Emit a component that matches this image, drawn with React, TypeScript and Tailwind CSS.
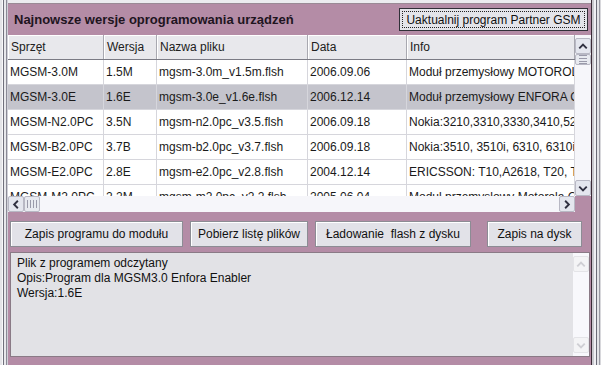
const rows = [
  ["MGSM-3.0M", "1.5M", "mgsm-3.0m_v1.5m.flsh", "2006.09.06", "Moduł przemysłowy MOTOROLA G20"],
  ["MGSM-3.0E", "1.6E", "mgsm-3.0e_v1.6e.flsh", "2006.12.14", "Moduł przemysłowy ENFORA GSM"],
  ["MGSM-N2.0PC", "3.5N", "mgsm-n2.0pc_v3.5.flsh", "2006.09.18", "Nokia:3210,3310,3330,3410,5210"],
  ["MGSM-B2.0PC", "3.7B", "mgsm-b2.0pc_v3.7.flsh", "2006.09.18", "Nokia:3510, 3510i, 6310, 6310i"],
  ["MGSM-E2.0PC", "2.8E", "mgsm-e2.0pc_v2.8.flsh", "2004.12.14", "ERICSSON: T10,A2618, T20, T28"],
  ["MGSM-M2.0PC", "2.2M", "mgsm-m2.0pc_v2.2.flsh", "2005.06.04", "Moduł przemysłowy Motorola G20"],
];

const cols = ["w-[96px]", "w-[53px]", "w-[151px]", "w-[99px]", "w-[168px]"];
const heads = ["Sprzęt", "Wersja", "Nazwa pliku", "Data", "Info"];

function Arrow({ dir, faded }: { dir: "up" | "down" | "left" | "right"; faded?: boolean }) {
  const d = {
    up: "M3.5 9.5 L7.5 5.5 L11.5 9.5",
    down: "M3.5 5.5 L7.5 9.5 L11.5 5.5",
    left: "M9.5 3.5 L5.5 7.5 L9.5 11.5",
    right: "M5.5 3.5 L9.5 7.5 L5.5 11.5",
  }[dir];
  return (
    <div
      className={`flex h-[16px] w-[16px] flex-none items-center justify-center rounded-[2px] border ${
        faded ? "border-[#e4e4e8] bg-[#f4f4f6]" : "border-[#b8b8c4] bg-[#e4e6ee]"
      }`}
    >
      <svg width="15" height="15" viewBox="0 0 15 15">
        <path d={d} fill="none" stroke={faded ? "#cfcfd4" : "#303040"} strokeWidth="2" />
      </svg>
    </div>
  );
}

function Grip({ vertical }: { vertical?: boolean }) {
  return (
    <div
      className={`flex flex-none items-center justify-center gap-[2px] rounded-[2px] border border-[#b8b8c4] bg-[#e8eaf0] ${
        vertical ? "h-[11px] w-[16px] flex-col" : "h-[16px] w-[16px] flex-row"
      }`}
    >
      {[0, 1, 2, 3].map((i) => (
        <div key={i} className={vertical ? "h-px w-[8px] bg-[#9a9aaa]" : "h-[8px] w-px bg-[#9a9aaa]"} />
      ))}
    </div>
  );
}

function Btn({ label, w, ml }: { label: string; w: string; ml: string }) {
  return (
    <div
      className={`${w} ${ml} flex h-[26px] flex-none items-center justify-center whitespace-pre border border-[#8c8c94] bg-[#e2e2e8] text-[12px] text-[#111] shadow-[inset_1px_1px_0_#fff]`}
    >
      {label}
    </div>
  );
}

export default function App() {
  return (
    <div
      className="flex h-[365px] w-[601px] overflow-hidden bg-[#d8d8dc]"
      style={{ fontFamily: '"Liberation Sans", Arial, sans-serif' }}
    >
      {/* left window frame */}
      <div className="flex w-[8px] flex-none">
        <div className="w-[2px] bg-[#e4e4e8]" />
        <div className="w-px bg-[#f8f8fa]" />
        <div className="w-px bg-[#70707c]" />
        <div className="w-[2px] bg-[#e8e8ec]" />
        <div className="w-px bg-[#8a8a96]" />
        <div className="w-px bg-[#d0d0d8]" />
      </div>

      <div className="flex w-[583px] flex-none flex-col">
        <div className="h-[4px] flex-none border-b border-[#9a8a96] bg-[#ececf0]" />
        <div className="flex flex-1 flex-col bg-[#b48ca6]">
          {/* title */}
          <div className="flex h-[31px] flex-none items-center justify-between pl-[6px] pr-[3px]">
            <span className="text-[13px] font-bold text-[#20141e]">Najnowsze wersje oprogramowania urządzeń</span>
            <div className="flex h-[23px] w-[189px] items-center justify-center border border-[#303038] bg-[#e4e4ea] p-[2px]">
              <div className="flex h-full w-full items-center justify-center border border-dotted border-[#222] text-[12px] text-[#111]">
                Uaktualnij program Partner GSM
              </div>
            </div>
          </div>

          {/* table + scrollbars */}
          <div className="flex h-[177px] flex-none flex-col bg-[#f4f4f6]">
            <div className="flex h-[161px] flex-none">
              <div className="flex w-[567px] flex-none flex-col overflow-hidden bg-white">
                <div className="flex h-[25px] flex-none border-b border-[#7a7a84] bg-[#e8e8ec]">
                  {heads.map((h, i) => (
                    <div
                      key={h}
                      className={`${cols[i]} flex flex-none items-center border-r border-[#a8a8b0] pl-[3px] text-[12px] text-[#202020] shadow-[inset_1px_1px_0_#fff]`}
                    >
                      {h}
                    </div>
                  ))}
                </div>
                {rows.map((r, ri) => (
                  <div
                    key={ri}
                    className={`flex h-[25px] flex-none border-b border-[#d6d6dc] ${ri === 1 ? "bg-[#c4c4cc]" : "bg-white"}`}
                  >
                    {r.map((c, ci) => (
                      <div
                        key={ci}
                        className={`${cols[ci]} flex flex-none items-center overflow-hidden whitespace-nowrap border-r border-[#d6d6dc] pl-[2px] text-[12px] text-[#1a1a1a]`}
                      >
                        {c}
                      </div>
                    ))}
                  </div>
                ))}
              </div>
              <div className="flex w-[16px] flex-none flex-col bg-[#f6f6fa] pt-[3px]">
                <Arrow dir="up" />
                <Grip vertical />
                <div className="flex-1" />
                <Arrow dir="down" />
              </div>
            </div>
            <div className="flex h-[16px] flex-none">
              <div className="flex w-[567px] flex-none bg-[#f6f6fa]">
                <Arrow dir="left" />
                <Grip />
                <div className="flex-1" />
                <Arrow dir="right" />
              </div>
              <div className="w-[16px] flex-none bg-[#b48ca6]" />
            </div>
          </div>

          {/* buttons */}
          <div className="flex h-[40px] flex-none items-center pl-[2px] pt-[3px]">
            <Btn label="Zapis programu do modułu" w="w-[173px]" ml="ml-0" />
            <Btn label="Pobierz listę plików" w="w-[118px]" ml="ml-[7px]" />
            <Btn label="Ładowanie  flash z dysku" w="w-[156px]" ml="ml-[7px]" />
            <Btn label="Zapis na dysk" w="w-[95px]" ml="ml-[16px]" />
          </div>

          {/* text area */}
          <div className="ml-[2px] mr-px flex h-[105px] flex-none border border-[#8a7a86] bg-[#e2e2e6]">
            <div className="flex-1 whitespace-pre pl-[6px] pt-[3px] text-[12px] leading-[15px] text-[#111]">
              {"Plik z programem odczytany\nOpis:Program dla MGSM3.0 Enfora Enabler\nWersja:1.6E"}
            </div>
            <div className="flex w-[16px] flex-none flex-col bg-[#f8f8fc] py-[3px]">
              <Arrow dir="up" faded />
              <div className="flex-1" />
              <Arrow dir="down" faded />
            </div>
          </div>
          <div className="flex-1" />
        </div>
      </div>

      {/* right window frame */}
      <div className="flex w-[10px] flex-none">
        <div className="w-px bg-[#3a2a36]" />
        <div className="w-[2px] bg-[#c8c8ce]" />
        <div className="w-[2px] bg-[#f0f0f4]" />
        <div className="w-px bg-[#6a6a76]" />
        <div className="w-[2px] bg-[#e4e4e8]" />
        <div className="w-px bg-[#9a9aa4]" />
        <div className="w-px bg-[#d8d8dc]" />
      </div>
    </div>
  );
}
